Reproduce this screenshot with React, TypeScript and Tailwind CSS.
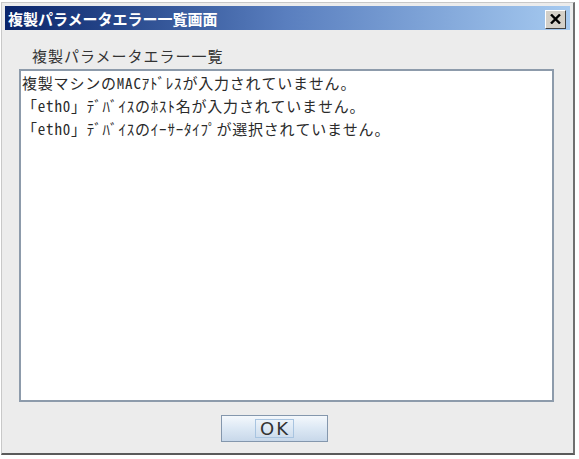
import React from "react";

const jp = { fontFamily: '"Noto Sans Mono CJK JP", "Noto Sans CJK JP", "DejaVu Sans Mono", monospace' };

export default function App() {
  return (
    <div className="w-[579px] h-[459px] bg-white pt-[2px] pl-[1px]">
      <div className="w-[574px] h-[453px] border border-[#c8c8c8] border-r-[#6f6f6f] border-b-[#5a5a5a] border-r-2 border-b-2 bg-[#ececec] p-[3px] flex flex-col">
        <div className="h-[24px] flex items-center justify-between pl-[3px] pr-[3px] bg-gradient-to-r from-[#0a246a] via-[#5a7fbf] to-[#a6caf0]">
          <span className="text-white font-bold text-[15px] leading-none" style={{ fontFamily: '"Noto Sans CJK JP", sans-serif' }}>
            複製パラメータエラー一覧画面
          </span>
          <div className="w-[21px] h-[19px] bg-[#d4d0c8] border border-t-white border-l-white border-r-[#404040] border-b-[#404040] flex items-center justify-center mr-[1px] mt-[2px]">
            <svg width="11" height="10" viewBox="0 0 11 10">
              <path d="M1 0.5 L10 9.5 M10 0.5 L1 9.5" stroke="#000" strokeWidth="2.4" />
            </svg>
          </div>
        </div>
        <div className="flex-1 flex flex-col pl-[14px] pr-[16px]">
          <div className="h-[39px] flex items-end pl-[13px] pb-[6px]">
            <span className="text-[15px] leading-none text-[#333] tracking-[1px]" style={{ fontFamily: '"Noto Sans CJK JP", sans-serif' }}>
              複製パラメータエラー一覧
            </span>
          </div>
          <div className="h-[333px] bg-white border-2 border-[#8d9bab] pl-[1px] pt-0 text-[15px] leading-[23px] tracking-[0.8px] text-[#2a2a2a]" style={jp}>
            <div>複製マシンのMACｱﾄﾞﾚｽが入力されていません。</div>
            <div>「eth0」ﾃﾞﾊﾞｲｽのﾎｽﾄ名が入力されていません。</div>
            <div>「eth0」ﾃﾞﾊﾞｲｽのｲｰｻｰﾀｲﾌﾟが選択されていません。</div>
          </div>
          <div className="flex-1 flex items-start justify-center pt-[13px] pr-[24px]">
            <div className="w-[107px] h-[27px] border border-[#8497ad] bg-gradient-to-b from-[#f4f8fc] via-[#dce8f4] to-[#c8d8ea] flex items-center justify-center">
              <span className="border border-[#a8c4e0] px-[3px] h-[19px] flex items-center text-[18px] leading-none text-[#333] tracking-[2px] pl-[4px]" style={{ fontFamily: '"DejaVu Sans", sans-serif' }}>
                OK
              </span>
            </div>
          </div>
        </div>
      </div>
    </div>
  );
}
